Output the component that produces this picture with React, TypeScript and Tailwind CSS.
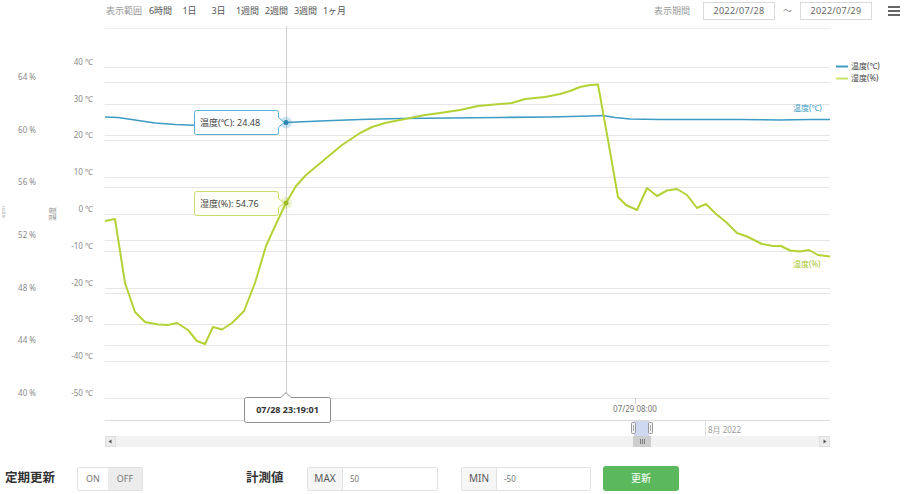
import React from "react";

const tempPts: [number, number][] = [
  [105, 117], [118, 117.5], [135, 120], [155, 123], [175, 124.5], [200, 125.5], [230, 125], [260, 123.5],
  [286, 122.5], [320, 121], [360, 119.5], [400, 118.5], [450, 118], [500, 117.5], [550, 117], [590, 116],
  [603, 115.5], [615, 117.5], [630, 119], [660, 119.5], [700, 119.5], [740, 119.5], [780, 120], [810, 119.5], [830, 119.5],
];

const humPts: [number, number][] = [
  [105, 221], [115, 219], [125, 283], [135, 312], [145, 322], [158, 324.5], [168, 325], [177, 323], [188, 330],
  [197, 341], [205, 344], [213, 327], [222, 329.5], [232, 323], [244, 311], [255, 283], [266, 246], [276, 224],
  [286, 203], [296, 186], [306, 175], [318, 165], [330, 155], [342, 145], [360, 133], [372, 127], [385, 123],
  [395, 121], [410, 118], [425, 115], [440, 113], [460, 110], [478, 106], [500, 104], [512, 103], [525, 99],
  [545, 97], [560, 94], [570, 91], [580, 87], [590, 85], [598, 84.5], [608, 140], [618, 197], [626, 205],
  [637, 210], [647, 188], [657, 196], [667, 190.5], [677, 189], [687, 195], [697, 208], [706, 204], [716, 214],
  [726, 222], [737, 233], [747, 236.5], [762, 244], [773, 246], [781, 246], [790, 250.5], [800, 251.5], [809, 250],
  [818, 255], [830, 256.5],
];

const toPath = (pts: [number, number][]) =>
  pts.map((p, i) => `${i === 0 ? "M" : "L"}${p[0]} ${p[1]}`).join(" ");

const tempLabels = ["40", "30", "20", "10", "0", "-10", "-20", "-30", "-40", "-50"];
const humLabels = ["64", "60", "56", "52", "48", "44", "40"];

function Chart() {
  const tempY = (i: number) => 66.7 + i * 36.81;
  const humY = (i: number) => 82 + i * 52.67;
  return (
    <svg width={912} height={428} viewBox="0 22 912 428" className="block">
      {/* grid */}
      <line x1={105} x2={830} y1={28.5} y2={28.5} stroke="#ececec" strokeWidth={1} />
      {tempLabels.map((_, i) => (
        <line key={"t" + i} x1={105} x2={830} y1={Math.round(tempY(i)) + 0.5} y2={Math.round(tempY(i)) + 0.5} stroke="#e6e6e6" strokeWidth={1} />
      ))}
      {humLabels.map((_, i) => (
        <line key={"h" + i} x1={105} x2={830} y1={Math.round(humY(i)) + 0.5} y2={Math.round(humY(i)) + 0.5} stroke="#e6e6e6" strokeWidth={1} />
      ))}
      <line x1={105} x2={830} y1={420.5} y2={420.5} stroke="#dcdcdc" strokeWidth={1} />

      {/* axis labels */}
      {tempLabels.map((t, i) => (
        <text key={"tl" + i} x={93} y={tempY(i) - 2} textAnchor="end" fontSize={8} fill="#8a8a8a">
          {t} ℃
        </text>
      ))}
      {humLabels.map((h, i) => (
        <text key={"hl" + i} x={36} y={humY(i) - 2} textAnchor="end" fontSize={8} fill="#8a8a8a">
          {h} %
        </text>
      ))}
      <text x={0} y={0} fontSize={7} fill="#888" transform="translate(55 214) rotate(-90)" textAnchor="middle">
        温度
      </text>
      <text x={0} y={0} fontSize={3.5} fill="#aaa" transform="translate(5 212) rotate(-90)" textAnchor="middle">
        湿度(%)
      </text>

      {/* crosshair */}
      <line x1={286.5} x2={286.5} y1={26} y2={398} stroke="#cfcfcf" strokeWidth={1} />

      {/* series */}
      <path d={toPath(tempPts)} fill="none" stroke="#3d9bc4" strokeWidth={1.6} strokeLinejoin="round" />
      <path d={toPath(humPts)} fill="none" stroke="#b3d236" strokeWidth={2} strokeLinejoin="round" />

      {/* series end labels */}
      <text x={793} y={111} fontSize={8} fill="#3d9bc4">温度(℃)</text>
      <text x={793} y={267} fontSize={8} fill="#a9c82e">湿度(%)</text>

      {/* legend */}
      <line x1={836} x2={848} y1={66.5} y2={66.5} stroke="#3d9bc4" strokeWidth={2} />
      <text x={851} y={69} fontSize={8} fill="#444">温度(℃)</text>
      <line x1={836} x2={848} y1={78.5} y2={78.5} stroke="#c9e06a" strokeWidth={2} />
      <text x={851} y={81} fontSize={8} fill="#444">湿度(%)</text>

      {/* markers */}
      <circle cx={286} cy={122.5} r={6} fill="#3d9bc4" opacity={0.25} />
      <circle cx={286} cy={122.5} r={2.5} fill="#2a86b0" />
      <circle cx={286} cy={203} r={6} fill="#b3d236" opacity={0.25} />
      <circle cx={286} cy={203} r={2.5} fill="#9fbd26" />

      {/* tooltips */}
      <path d="M196.5 110.5 H276.5 Q278.5 110.5 278.5 112.5 V117.5 L284 122.5 L278.5 127.5 V132.5 Q278.5 134.5 276.5 134.5 H196.5 Q194.5 134.5 194.5 132.5 V112.5 Q194.5 110.5 196.5 110.5 Z" fill="#fbfdfe" stroke="#5aaed2" strokeWidth={1} />
      <text x={200} y={126} fontSize={9} fill="#444">温度(℃): 24.48</text>
      <path d="M196.5 191.5 H276.5 Q278.5 191.5 278.5 193.5 V198.5 L284 203 L278.5 207.5 V213.5 Q278.5 215.5 276.5 215.5 H196.5 Q194.5 215.5 194.5 213.5 V193.5 Q194.5 191.5 196.5 191.5 Z" fill="#fdfef8" stroke="#c5dd6c" strokeWidth={1} />
      <text x={200} y={207} fontSize={9} fill="#444">湿度(%): 54.76</text>

      {/* x axis */}
      <line x1={635.5} x2={635.5} y1={398} y2={404} stroke="#cfcfcf" strokeWidth={1} />
      <text x={635} y={412} fontSize={8} fill="#777" textAnchor="middle">07/29 08:00</text>

      {/* x tooltip */}
      <path d="M246.5 397.5 H281 L286 392.5 L291 397.5 H328.5 Q330.5 397.5 330.5 399.5 V420.5 Q330.5 422.5 328.5 422.5 H246.5 Q244.5 422.5 244.5 420.5 V399.5 Q244.5 397.5 246.5 397.5 Z" fill="#ffffff" stroke="#8c8c8c" strokeWidth={1} />
      <text x={287.5} y={413} fontSize={9} fontWeight={700} fill="#333" textAnchor="middle">07/28 23:19:01</text>

      {/* navigator */}
      <line x1={705.5} x2={705.5} y1={421} y2={436} stroke="#e0e0e0" strokeWidth={1} />
      <text x={708} y={433} fontSize={8} fill="#9a9a9a">8月 2022</text>
      <rect x={634} y={421} width={15} height={15} fill="#b9c8ea" opacity={0.7} />
      <rect x={631.5} y={422.5} width={4} height={11} rx={1} fill="#f2f2f2" stroke="#999" strokeWidth={1} />
      <line x1={633.5} x2={633.5} y1={425} y2={431} stroke="#999" strokeWidth={0.8} />
      <rect x={648.5} y={422.5} width={4} height={11} rx={1} fill="#f2f2f2" stroke="#999" strokeWidth={1} />
      <line x1={650.5} x2={650.5} y1={425} y2={431} stroke="#999" strokeWidth={0.8} />

      {/* scrollbar */}
      <rect x={105} y={436} width={725} height={11} fill="#f2f2f2" />
      <rect x={105.5} y={436.5} width={10} height={10} fill="#ebebeb" stroke="#e0e0e0" strokeWidth={1} />
      <path d="M111.5 439.5 L108.5 441.5 L111.5 443.5 Z" fill="#555" />
      <rect x={819.5} y={436.5} width={10} height={10} fill="#ebebeb" stroke="#e0e0e0" strokeWidth={1} />
      <path d="M823.5 439.5 L826.5 441.5 L823.5 443.5 Z" fill="#555" />
      <rect x={633} y={436} width={18} height={11} fill="#cdcdcd" />
      <line x1={640.5} x2={640.5} y1={439} y2={444} stroke="#666" strokeWidth={0.8} />
      <line x1={642.5} x2={642.5} y1={439} y2={444} stroke="#666" strokeWidth={0.8} />
      <line x1={644.5} x2={644.5} y1={439} y2={444} stroke="#666" strokeWidth={0.8} />
    </svg>
  );
}

export default function App() {
  const ranges = ["6時間", "1日", "3日", "1週間", "2週間", "3週間", "1ヶ月"];
  return (
    <div className="w-[912px] h-[494px] bg-white overflow-hidden font-['Noto_Sans','Noto_Sans_CJK_JP',sans-serif] text-[#555]">
      {/* top bar */}
      <div className="flex h-[22px] items-center">
        <div className="flex items-center pl-[106px]">
          <span className="text-[9px] text-[#999] w-[40px]">表示範囲</span>
          {ranges.map((r) => (
            <span key={r} className="w-[29px] text-center text-[9px] text-[#555]">
              {r}
            </span>
          ))}
        </div>
        <div className="ml-auto flex items-center pr-[12px]">
          <span className="text-[9px] text-[#999] mr-[13px]">表示期間</span>
          <div className="w-[72px] h-[18px] border border-[#d9d9d9] flex items-center justify-center text-[9px] text-[#666] tracking-[0.3px]">
            2022/07/28
          </div>
          <span className="w-[25px] text-center text-[9px] text-[#888]">～</span>
          <div className="w-[72px] h-[18px] border border-[#d9d9d9] flex items-center justify-center text-[9px] text-[#666] tracking-[0.3px]">
            2022/07/29
          </div>
          <div className="ml-[16px] flex flex-col gap-[2px]">
            <div className="w-[12px] h-[2px] bg-[#666]" />
            <div className="w-[12px] h-[2px] bg-[#666]" />
            <div className="w-[12px] h-[2px] bg-[#666]" />
          </div>
        </div>
      </div>

      <Chart />

      {/* controls */}
      <div className="flex items-center pt-[13px] h-[44px] box-border">
        <span className="ml-[5px] w-[72px] text-[12.5px] font-bold text-[#333] leading-none">定期更新</span>
        <div className="flex h-[24px] border border-[#e2e2e2] rounded-[2px] text-[9px]">
          <div className="w-[30px] flex items-center justify-center text-[#777]">ON</div>
          <div className="w-[34px] flex items-center justify-center bg-[#ececec] text-[#777]">OFF</div>
        </div>
        <span className="ml-[103px] w-[61px] text-[12.5px] font-bold text-[#333] leading-none">計測値</span>
        <div className="flex h-[24px] w-[131px] border border-[#e2e2e2] rounded-[2px]">
          <div className="w-[35px] flex items-center justify-center bg-[#f6f6f6] border-r border-[#e2e2e2] text-[10px] text-[#555]">MAX</div>
          <div className="flex-1 flex items-center pl-[7px] text-[8px] text-[#777]">50</div>
        </div>
        <div className="ml-[23px] flex h-[24px] w-[130px] border border-[#e2e2e2] rounded-[2px]">
          <div className="w-[35px] flex items-center justify-center bg-[#f6f6f6] border-r border-[#e2e2e2] text-[10px] text-[#555]">MIN</div>
          <div className="flex-1 flex items-center pl-[7px] text-[8px] text-[#777]">-50</div>
        </div>
        <div className="ml-[12px] w-[76px] h-[25px] rounded-[3px] bg-[#5cb85c] flex items-center justify-center text-[10px] text-white">
          更新
        </div>
      </div>
    </div>
  );
}
